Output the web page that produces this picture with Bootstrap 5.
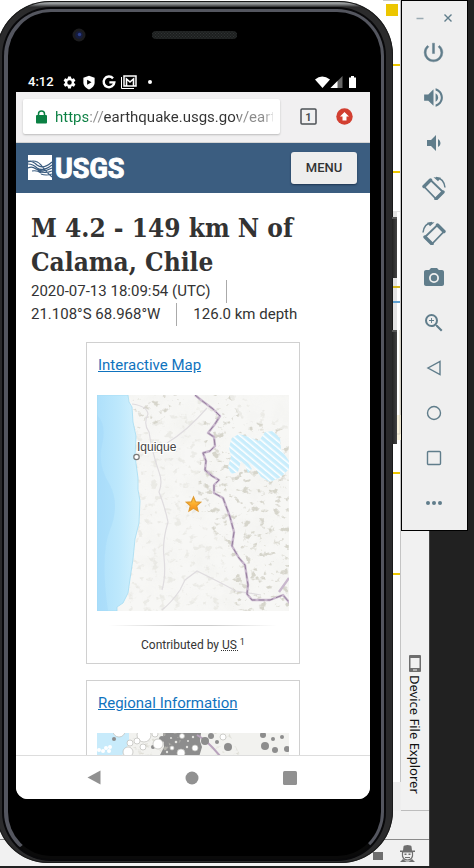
<!DOCTYPE html>
<html lang="en">
<head>
<meta charset="utf-8">
<meta name="viewport" content="width=device-width, initial-scale=1">
<title>Android Emulator</title>
<link href="https://cdn.jsdelivr.net/npm/bootstrap@5.3.0/dist/css/bootstrap.min.css" rel="stylesheet">
<style>
body{background:#212121;font-family:Roboto,"Liberation Sans",sans-serif;color:#333;line-height:1.5}
svg{display:block;flex:none}
.desktop{height:100vh;min-height:600px}
/* IDE window behind the emulator */
.ide{position:absolute;inset:0 44px 2px 0;background:#fff;border-right:1px solid #444}
.tool-strip{width:29px;background:#f1f1f1;border-left:1px solid #c4c4c4;padding-bottom:16px}
.tool-tab{writing-mode:vertical-rl;font:13px/16px "Noto Sans","Open Sans",sans-serif;color:#111;gap:3px;background:none;border:0;padding:0}
.ide-bar{height:29px;background:#f1f1f1;border-top:1px solid #bdbdbd}
.ide-status{height:27px;background:#f1f1f1;border-top:1px solid #8b8b8b;padding-right:14px;gap:17px}
.marks{position:absolute;top:0;right:27px}
/* phone */
.phone{margin:1px 8px 5px -4px;border-radius:54px 54px 52px 52px;padding:11px 23px 64px 20px;
 background:linear-gradient(#5a5e60 0,#a4a8a9 2px,#8b8e90 3px,#2b2b2c 6px,#2b2b2c 100%);box-shadow:inset 0 0 0 1px #1a1a1a}
.phone-ring{position:absolute;inset:8px 9px 4px 8px;border-radius:47px;background:#000;border:3px solid #54565f;border-left-width:4px;border-bottom-color:#0a0a0a;box-shadow:0 0 0 2px #08080a}
.side-key{position:absolute;right:-4px;width:5px;background:linear-gradient(90deg,#222,#444);border-top:2px solid #555}
.key-power{top:216px;height:61px}
.key-volume{top:329px;height:114px}
.earpiece{position:absolute;left:0;right:0;top:23px}
.statusbar{height:20px;color:#fff;font-size:13px;font-weight:500;line-height:20px;padding:0 13px 0 12px;background:#000}
.speaker-zone{height:60px}
.app{background:#fff;border-radius:0 0 12px 12px}
.browser-bar{background:#f1f0f1;height:51px;padding:7px 17px 8px 7px;border-bottom:1px solid #d4d4d4}
.url-box{background:#fff;border-radius:2px;box-shadow:0 1px 2px #bbb;padding:0 7px 0 13px;gap:8px}
.url-box input{min-width:0;width:100%;border:0;outline:0;padding:0;font-size:15px;line-height:36px;height:36px;color:transparent;
 background:linear-gradient(90deg,#0b8043 33px,#8a8a8a 33px 48px,#333 48px 183px,#8a8a8a 183px 208px,#ddd 217px);-webkit-background-clip:text;background-clip:text}
.bar-actions{padding-left:20px;gap:19px}
.site-head{background:#3b5d80;height:50px;padding:0 13px 0 12px}
.menu-btn{background:#eee;border:0;border-radius:3px;width:66px;height:32px;padding:0;font-size:13px;font-weight:500;color:#333;box-shadow:0 1px 2px #1e3550}
.page-body{padding:18px 15px 0}
h1{font:bold 26px/34px "DejaVu Serif Condensed","DejaVu Serif",serif;color:#333;margin:0}
.facts{font-size:15px;line-height:23px;color:#333;margin:1px 0 16px}
.facts li{padding-right:16px;margin-right:16px;border-right:1px solid #aaa}
.facts li:last-child{border:0;margin:0;padding:0}
.info-card{width:214px;border:1px solid #d0d0d0;margin:0 auto 16px;padding:9px 10px}
.info-card h2{font-size:15px;line-height:26px;font-weight:400;margin:0 0 17px 1px}
.info-card a{color:#0f73be}
.info-card svg{width:100%;height:auto}
.fade-rule{height:1px;margin:14px 12px 10px;background:linear-gradient(90deg,#fff,#ccc 40%,#ccc 60%,#fff)}
.credit{font-size:12px;line-height:18px;text-align:center}
.credit abbr{text-decoration:underline dotted;cursor:help}
.navbar-os{height:44px;border-top:1px solid #ddd;background:#fff;padding:0 73px 0 71px}
.os-key,.side-btn,.win-btn,.icon-btn{background:none;border:0;padding:0;color:inherit;display:flex;align-items:center;justify-content:center}
/* emulator controls */
.controls{width:67px;margin-right:6px;border:1px solid #000;background:#efefef;color:#607d8b;padding:0 2px 5px 0}
.win-row{height:29px;gap:16px;padding-top:4px}
.side-btn{height:45px;width:100%}
</style>
<script src="https://cdn.jsdelivr.net/npm/bootstrap@5.3.0/dist/js/bootstrap.bundle.min.js"></script>
</head>
<body>
<div class="desktop position-relative d-flex align-items-start overflow-hidden">

  <section class="ide d-flex flex-column" aria-label="IDE window">
    <div class="d-flex flex-grow-1 justify-content-end">
      <div class="tool-strip d-flex flex-column justify-content-end align-items-center">
        <button class="tool-tab d-flex align-items-center" type="button">
          <svg width="12" height="17" viewBox="0 0 12 17"><rect width="12" height="17" rx="1" fill="#6e6e6e"/><path d="M1.500 3h9v10h-9z" fill="#f1f1f1"/><path d="M4 14.500h4v1H4z" fill="#f1f1f1"/></svg>
          Device File Explorer
        </button>
      </div>
    </div>
    <div class="ide-bar"></div>
    <div class="ide-status d-flex align-items-center justify-content-end">
      <svg width="12" height="14" viewBox="0 0 12 14" fill="#6e6e6e"><path d="M2 6h10v8H2zM0 2h1.500v5H0zM0 2h5v1.500H0z"/></svg>
      <svg width="15" height="17" viewBox="0 0 15 17"><path d="M3.500 1.500Q4 0 7.500 0t4 1.500l.5 4h3v1.500H0V5.500h3z" fill="#6e6e6e"/><path d="M2.500 7h10v4q-1 4-5 4t-5-4z" fill="#f1f1f1" stroke="#6e6e6e" stroke-width="1.200"/><path d="M4.500 8.500h2V10h-2zM8.500 8.500h2V10h-2zM5 12h5v1H5zM0 17l3-3 3 2.500h3l3-2.500 3 3z" fill="#6e6e6e"/></svg>
    </div>
    <svg class="marks" width="19" height="812" viewBox="0 0 19 812">
      <path d="M0 0h19v1H0z" fill="#c9c9c9"/><path d="M3 4h12v12H3z" fill="#ecc600"/>
      <path d="M8 211h9v208H8z" fill="#e3e3e3"/><path d="M14 212h3v210h-3z" fill="#fff"/>
      <path d="M10 415h9v25h-9z" fill="#f8f1da"/><path d="M17 330v104h-5" fill="none" stroke="#d9d3c0"/>
      <path d="M8 64h9v2H8zM8 171h9v2H8zM8 472h9v2H8zM8 573h9v2H8z" fill="#ecc600"/><path d="M8 286h9v2H8z" fill="#d4b51f"/><path d="M8 301h9v2H8z" fill="#5d9fd0"/>
      <path d="M8 782h10v29H8z" fill="#eee"/>
    </svg>
  </section>

  <main class="phone position-relative d-flex flex-column flex-grow-1 align-self-stretch">
    <div class="phone-ring"></div>
    <div class="side-key key-power"></div>
    <div class="side-key key-volume"></div>
    <svg class="earpiece" width="100%" height="24" viewBox="0 0 397 24">
      <circle cx="83" cy="11" r="6.500" fill="#1c1c1e"/><circle cx="83" cy="11" r="3.800" fill="#161c3c"/><circle cx="83.500" cy="10.500" r="1.700" fill="#2c3f8c"/>
      <defs><pattern id="mesh" width="3" height="3" patternUnits="userSpaceOnUse"><path d="M0 0h3v3H0z" fill="#1d1f1f"/><path d="M0 0h1v1H0zM1.500 1.500h1v1h-1z" fill="#303434"/></pattern></defs>
      <rect x="156" y="7" width="85" height="8" rx="4" fill="url(#mesh)"/>
    </svg>
    <div class="speaker-zone flex-shrink-0"></div>
    <div class="statusbar position-relative d-flex align-items-center flex-shrink-0">
      <span class="me-2">4:12</span>
      <svg width="15" height="15" viewBox="0 0 24 24" fill="#fff"><path d="M19.140 12.940c.04-.3.060-.61.060-.94 0-.32-.02-.64-.07-.94l2.030-1.580a.49.490 0 0 0 .12-.61l-1.920-3.320a.49.490 0 0 0-.59-.22l-2.390.96c-.5-.38-1.030-.7-1.620-.94l-.36-2.540A.48.480 0 0 0 13.920 2.400h-3.840c-.24 0-.43.170-.47.410l-.36 2.540c-.59.240-1.130.57-1.620.94l-2.390-.96a.48.480 0 0 0-.59.220L2.740 8.870c-.12.210-.08.470.12.610l2.030 1.580c-.05.3-.09.630-.09.940s.02.640.07.940l-2.030 1.580a.49.490 0 0 0-.12.610l1.920 3.320c.12.220.37.290.59.220l2.390-.96c.5.380 1.030.7 1.620.94l.36 2.540c.05.240.24.410.48.410h3.840c.24 0 .44-.17.470-.41l.36-2.540c.59-.24 1.130-.56 1.620-.94l2.390.96c.22.080.47 0 .59-.22l1.920-3.320a.48.480 0 0 0-.12-.61zM12 15.600A3.600 3.600 0 1 1 12 8.400a3.600 3.600 0 0 1 0 7.200z"/></svg>
      <svg class="ms-1" width="16" height="15" viewBox="0 0 24 24"><path d="M12 1 3 4.500V12c0 5 4 9.500 9 11 5-1.500 9-6 9-11V4.500z" fill="#fff"/><path d="M9 7.500v8l7-4z"/></svg>
      <svg class="ms-1" width="16" height="16" viewBox="0 0 24 24" fill="none" stroke="#fff" stroke-width="3.600"><path d="M18 6.500A8 8 0 1 0 20 12.500h-7.500"/></svg>
      <svg class="ms-1" width="16" height="14" viewBox="0 0 16 14" fill="none" stroke="#fff"><path d="M.5 2v11.500H13"/><path d="M3 1h12v10H3z" stroke-width="1.500"/><path d="M5.500 11V4L9 7l3.500-3v7" stroke-width="1.600"/></svg>
      <svg class="ms-2" width="10" height="6" viewBox="0 0 10 6"><circle cx="5" cy="3" r="2" fill="#fff"/></svg>
      <svg class="ms-auto" width="42" height="13" viewBox="0 0 42 13"><path d="M0 3.500Q7-2.500 15 3.500L7.500 12z" fill="#fff"/><path d="M27.500 0v12h-12z" fill="#666"/><path d="M22.500 5v7h-7z" fill="#fff"/><path d="M36 0h3v1.500h2V12h-7V1.500h2z" fill="#fff"/></svg>
    </div>

    <div class="app position-relative d-flex flex-column flex-grow-1 overflow-hidden">
      <div class="browser-bar d-flex align-items-stretch flex-shrink-0">
        <div class="url-box d-flex align-items-center flex-grow-1 overflow-hidden">
          <svg width="11" height="14" viewBox="0 0 11 14"><path d="M2.500 6V4a3 3 0 0 1 6 0v2" fill="none" stroke="#0b8043" stroke-width="1.500"/><rect y="5" width="11" height="8.500" rx="1" fill="#0b8043"/></svg>
          <input type="text" aria-label="Address" value="https://earthquake.usgs.gov/earthquakes/eventpage">
        </div>
        <div class="bar-actions d-flex align-items-center">
          <button class="icon-btn" type="button" aria-label="Tabs">
            <svg width="17" height="17" viewBox="0 0 17 17"><rect x="1" y="1" width="15" height="15" rx="1" fill="none" stroke="#4c5156" stroke-width="1.500"/><text x="8.500" y="12.500" text-anchor="middle" font-family="Roboto" font-weight="700" font-size="11" fill="#4c5156">1</text></svg>
          </button>
          <button class="icon-btn" type="button" aria-label="Update">
            <svg width="17" height="17" viewBox="0 0 17 17"><circle cx="8.500" cy="8.500" r="8.200" fill="#d23f31"/><path d="m8.500 4 4.500 4.500h-2.500v4h-4v-4H4z" fill="#fff"/></svg>
          </button>
        </div>
      </div>
      <header class="site-head d-flex align-items-center justify-content-between flex-shrink-0">
        <a href="#" aria-label="USGS">
          <svg width="110" height="36" viewBox="0 -4 110 36">
            <path d="M0 1h24v25H0z" fill="#fff"/>
            <g fill="none" stroke="#3b5d80" stroke-width="1.200"><path d="M0 7q5 0 9 4 6 5 15-3M0 10q5 0 9 4 6 4 15-3M0 14q4-2 8 1 7 4 16-1M10 17q7 3 14 0M13 20q5 2 11 0M0 8q8-3 13 3 5 7 11 12M4 17q5-1 9 2"/></g>
            <text x="27" y="24" font-family="Liberation Sans Narrow,Roboto,sans-serif" font-size="27" font-weight="700" fill="#fff" stroke="#fff">USGS</text>
          </svg>
        </a>
        <button class="menu-btn" type="button">MENU</button>
      </header>
      <div class="page-body overflow-hidden flex-grow-1">
        <h1>M 4.2 - 149 km N of Calama, Chile</h1>
        <ul class="facts list-unstyled d-flex flex-wrap">
          <li>2020-07-13 18:09:54 (UTC)</li><li>21.108°S 68.968°W</li><li>126.0 km depth</li>
        </ul>
        <article class="info-card">
          <h2><a href="#">Interactive Map</a></h2>
          <svg viewBox="0 0 192 216" role="img" aria-label="Map of the area near Iquique">
            <defs>
              <filter id="relief" x="0" y="0" width="100%" height="100%"><feTurbulence type="fractalNoise" baseFrequency=".13 .16" numOctaves="3" seed="8"/><feColorMatrix values="0 0 0 0 .64  0 0 0 0 .63  0 0 0 0 .56  7 0 0 0 -4.100"/></filter>
              <filter id="soft" x="0" y="0" width="100%" height="100%"><feTurbulence type="fractalNoise" baseFrequency=".04" numOctaves="3" seed="3"/><feColorMatrix values="0 0 0 0 .87  0 0 0 0 .87  0 0 0 0 .84  2 0 0 0 -.8"/></filter>
              <pattern id="salt" width="5" height="5" patternUnits="userSpaceOnUse" patternTransform="rotate(-50)"><path d="M0 0h5v5H0z" fill="#c9edfc"/><path d="M0 0h1.500v5H0z" fill="#fff"/></pattern>
              <linearGradient id="sea"><stop stop-color="#aee0fb"/><stop offset=".5" stop-color="#bde8fc"/><stop offset="1" stop-color="#d5f2fd"/></linearGradient>
              <linearGradient id="gold" x2="0" y2="1"><stop stop-color="#ffd24a"/><stop offset="1" stop-color="#f98a12"/></linearGradient>
              <clipPath id="hills"><path d="M34 0h68l20 22-8 18-8 30 10 40 22 45 10 45 46 2v14H22l14-50 8-50-6-50-4-50zM102 0h40l50 30v172h-35l-15-42-18-60-10-30 5-30 4-18z"/></clipPath>
              <clipPath id="east"><path d="M104 0h28l12 24 48 12v180h-52l-10-60-30-46 6-80 14-28zM34 0h60L60 28l-22 8z"/></clipPath>
            </defs>
            <path d="M0 0h192v216H0z" fill="#f7f7f5"/>
            <path d="M0 0h192v216H0z" filter="url(#soft)" opacity=".5"/>
            <g clip-path="url(#hills)" opacity=".3"><path d="M0 0h192v216H0z" filter="url(#relief)"/></g>
            <g clip-path="url(#east)" opacity=".8"><path d="M0 0h192v216H0z" filter="url(#relief)"/></g>
            <path d="M0 0h31q0 8 4 12l1 15 3 14-1 20 3 22q-1 12 2 23l-1 22-4 16-2 20-3 20-2 14-5 10-6 4v4H0z" fill="url(#sea)" stroke="#a4dcf3" stroke-width=".8"/>
            <path d="M0 20q10 10 5 30t8 40q10 20 0 45t-2 81H0z" fill="#9fd8f9" opacity=".4"/>
            <g fill="none" stroke="#dfdcdf" stroke-width="1.200"><path d="M35 9q15 2 16 10-5 10 1 18 3 20 10 40 4 10 0 20 6 15 9 30-6 20-4 35 2 20-2 33M65 215q10-8 18-20l5-10 12-9 24 12 15 8 25 4M70 48q20-12 40-35"/></g>
            <g fill="none" stroke-linejoin="round"><path d="M98 0l6 5 12 9 7 7-5 8-7 9 6 4 1 9-5 5-7 2 3 8-1 9 7 6 7 4-5 5v8l9 5 7 19 4 15-2 14 7 12 6 7 3 20-1 9 5 6h18l13-5 10 12M182 197l10-14" stroke="#c9b8cd" stroke-width="2.400"/><path d="M98 0l6 5 12 9 7 7-5 8-7 9 6 4 1 9-5 5-7 2 3 8-1 9 7 6 7 4-5 5v8l9 5 7 19 4 15-2 14 7 12 6 7 3 20-1 9 5 6h18l13-5 10 12" stroke="#957f9e" stroke-dasharray="6 3"/></g>
            <path d="M132 52 135 43 142 39 152 42 162 46 168 37 176 36 183 43 184 54 192 66V74L184 82 173 87 164 82 158 73 150 66 155 74 151 78 148 70 144 66 141 77 134 79 131 72 134 62z" fill="url(#salt)"/>
            <circle cx="39.500" cy="62" r="2.700" fill="#fff" stroke="#777" stroke-width="1.200"/>
            <text x="40" y="56" font-family="Liberation Sans,sans-serif" font-size="12" fill="#444" stroke="#fff" stroke-width="2" paint-order="stroke">Iquique</text>
            <path d="m96.500 102 2 4.800 5.200.5-4 3.500 1.300 5.200-4.500-2.800-4.500 2.800 1.300-5.200-4-3.500 5.200-.5z" fill="url(#gold)" stroke="#e09a30" stroke-width="1.200"/>
          </svg>
          <div class="fade-rule"></div>
          <p class="credit m-0">Contributed by <abbr title="USGS National Earthquake Information Center">US </abbr><sup>1</sup></p>
        </article>
        <article class="info-card">
          <h2><a href="#">Regional Information</a></h2>
          <svg viewBox="0 0 192 60" role="img" aria-label="Regional seismicity map">
            <path d="M0 0h192v60H0z" fill="#f2f2ef"/><path d="M0 0h32v10l-8 14v36H0z" fill="#c8ebfb"/>
            <path d="M66 0h38l-1 8 2 6-3 10-6 8H66l2-8-7 2 6-12z" fill="#8d8d8d"/>
            <g clip-path="url(#east)" opacity=".6"><path d="M0 0h192v60H0z" filter="url(#relief)"/></g>
            <path d="m100 2 8 5 8 8 8 9 6 14" fill="none" stroke="#b9a3bd" stroke-width="2"/>
            <g fill="#8d8d8d"><circle cx="17" cy="6" r="2"/><circle cx="131" cy="14" r="4"/><circle cx="168" cy="13" r="4"/><circle cx="166" cy="2" r="3"/><circle cx="176" cy="6" r="2"/><circle cx="185" cy="4" r="2"/><circle cx="178" cy="17" r="3"/><circle cx="190" cy="16" r="3"/><circle cx="108" cy="8" r="4"/><circle cx="114" cy="3" r="3"/><circle cx="120" cy="9" r="2"/><circle cx="65" cy="6" r="3"/><circle cx="56" cy="14" r="2"/></g>
            <g fill="#fff" stroke="#bcbcb8" stroke-width=".7"><circle cx="22" cy="-2" r="6"/><circle cx="47" cy="2" r="7"/><circle cx="33" cy="10" r="3"/><circle cx="40" cy="8" r="3"/><circle cx="46" cy="14" r="3"/><circle cx="31" cy="19" r="5"/><circle cx="61" cy="11" r="5"/><circle cx="85" cy="3" r="2.500"/><circle cx="98" cy="15" r="3"/><circle cx="84" cy="20" r="4"/><circle cx="126" cy="4" r="3"/><circle cx="75" cy="15" r="2"/><circle cx="58" cy="1" r="3"/></g>
            <g fill="#e4e4e0"><circle cx="74" cy="5" r="1"/><circle cx="79" cy="9" r="1.300"/><circle cx="91" cy="8" r="1"/><circle cx="96" cy="4" r="1.200"/><circle cx="70" cy="19" r="1.200"/><circle cx="90" cy="14" r="1.200"/></g>
            <g fill="#fff"><circle cx="2" cy="17" r="2"/><circle cx="6" cy="18" r="2"/><circle cx="9" cy="15" r="2"/><circle cx="13" cy="14" r="2"/><circle cx="12" cy="18" r="2"/></g>
          </svg>
        </article>
      </div>
      <nav class="navbar-os d-flex align-items-center justify-content-between flex-shrink-0" aria-label="System">
        <button class="os-key" type="button" aria-label="Back"><svg width="14" height="15" viewBox="0 0 14 15"><path d="M13.500.5v14L.5 7.500z" fill="#919191"/></svg></button>
        <button class="os-key" type="button" aria-label="Home"><svg width="14" height="14" viewBox="0 0 14 14"><circle cx="7" cy="7" r="6.500" fill="#919191"/></svg></button>
        <button class="os-key" type="button" aria-label="Overview"><svg width="14" height="14" viewBox="0 0 14 14"><rect width="14" height="14" rx="1.500" fill="#919191"/></svg></button>
      </nav>
    </div>
  </main>

  <aside class="controls position-relative flex-shrink-0" aria-label="Emulator controls">
    <div class="win-row d-flex align-items-center justify-content-center">
      <button class="win-btn" type="button" aria-label="Minimize"><svg width="12" height="12" viewBox="0 0 12 12"><path d="M2.500 6.500h7" stroke="#9aaab2" stroke-width="1.500"/></svg></button>
      <button class="win-btn" type="button" aria-label="Close"><svg width="12" height="12" viewBox="0 0 12 12"><path d="m2.500 2.500 7 7m0-7-7 7" stroke="#607d8b" stroke-width="1.400"/></svg></button>
    </div>
    <button class="side-btn" type="button" aria-label="Power"><svg width="25" height="25" viewBox="0 0 24 24" fill="currentColor"><path d="M13 3h-2v10h2V3zm4.830 2.170-1.420 1.420A6.920 6.920 0 0 1 19 12c0 3.870-3.130 7-7 7s-7-3.130-7-7c0-2.190 1.010-4.140 2.580-5.420L6.170 5.170A8.930 8.930 0 0 0 3 12a9 9 0 0 0 18 0c0-2.740-1.230-5.180-3.170-6.830z" stroke="currentColor" stroke-width=".4"/></svg></button>
    <button class="side-btn" type="button" aria-label="Volume up"><svg width="25" height="25" viewBox="0 0 24 24" fill="currentColor"><path d="M3 9v6h4l5 5V4L7 9H3zm13.500 3A4.500 4.500 0 0 0 14 7.970v8.050c1.480-.73 2.500-2.250 2.500-4.020zM14 3.230v2.060c2.890.86 5 3.540 5 6.710s-2.110 5.850-5 6.710v2.060c4.010-.91 7-4.490 7-8.770s-2.990-7.860-7-8.770z"/></svg></button>
    <button class="side-btn" type="button" aria-label="Volume down"><svg width="24" height="24" viewBox="0 0 24 24" fill="currentColor"><path d="M18.500 12A4.500 4.500 0 0 0 16 7.970v8.050c1.480-.73 2.500-2.250 2.500-4.020zM5 9v6h4l5 5V4L9 9H5z"/></svg></button>
    <button class="side-btn" type="button" aria-label="Rotate left"><svg width="24" height="24" viewBox="0 0 24 24" fill="none" stroke="currentColor"><g id="turn"><path d="M2 10.500 8.500 4l12.500 12-7 7z" stroke-width="1.800" stroke-linejoin="round"/><path d="M8.500 4 2 10.500M21 16l-7 7" stroke-width="3.400" stroke-linecap="round"/><path d="M14 1.500q8 1 9 10" stroke-width="1.500"/><path d="M11.500 1.200 19 1.800l-3 3.500z" fill="currentColor" stroke="none"/></g></svg></button>
    <button class="side-btn" type="button" aria-label="Rotate right"><svg width="24" height="24" viewBox="0 0 24 24" fill="none" stroke="currentColor"><use href="#turn" transform="matrix(-1 0 0 1 24 0)"/></svg></button>
    <button class="side-btn" type="button" aria-label="Take screenshot"><svg width="24" height="24" viewBox="0 0 24 24" fill="currentColor"><circle cx="12" cy="12" r="3.200"/><path d="M9 2 7.170 4H4c-1.100 0-2 .9-2 2v12c0 1.100.9 2 2 2h16c1.100 0 2-.9 2-2V6c0-1.100-.9-2-2-2h-3.170L15 2H9zm3 15a5 5 0 1 1 0-10 5 5 0 0 1 0 10z"/></svg></button>
    <button class="side-btn" type="button" aria-label="Zoom"><svg width="24" height="24" viewBox="0 0 24 24" fill="currentColor"><path d="M15.500 14h-.79l-.28-.27A6.470 6.470 0 0 0 16 9.500 6.500 6.500 0 1 0 9.500 16c1.610 0 3.090-.59 4.230-1.570l.27.280v.79l5 4.990L20.490 19l-4.990-5zm-6 0C7.010 14 5 11.990 5 9.500S7.010 5 9.500 5 14 7.010 14 9.500 11.990 14 9.500 14zM12 9.100H9.900V7H9v2.100H7v.8h2V12h.9V9.900H12z"/></svg></button>
    <button class="side-btn" type="button" aria-label="Back"><svg width="16" height="16" viewBox="0 0 16 16" fill="none" stroke="currentColor" stroke-width="1.400"><path d="M14 1.500v13L2 8z"/></svg></button>
    <button class="side-btn" type="button" aria-label="Home"><svg width="16" height="16" viewBox="0 0 16 16" fill="none" stroke="currentColor" stroke-width="1.400"><circle cx="8" cy="8" r="6.500"/></svg></button>
    <button class="side-btn" type="button" aria-label="Overview"><svg width="16" height="16" viewBox="0 0 16 16" fill="none" stroke="currentColor" stroke-width="1.400"><rect x="1.500" y="1.500" width="13" height="13" rx="1"/></svg></button>
    <button class="side-btn" type="button" aria-label="More"><svg width="16" height="6" viewBox="0 0 16 6" fill="currentColor"><circle cx="2" cy="3" r="2"/><circle cx="8" cy="3" r="2"/><circle cx="14" cy="3" r="2"/></svg></button>
  </aside>
</div>
</body>
</html>
